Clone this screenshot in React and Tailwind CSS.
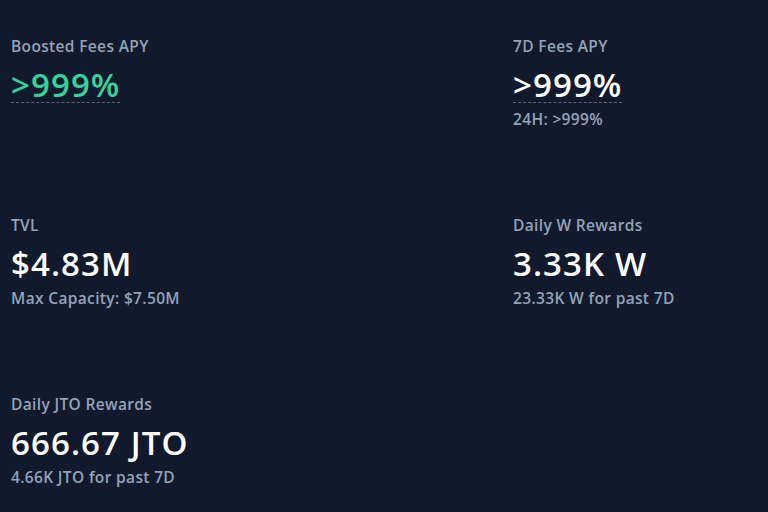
import React from "react";

function Stat({ label, value, sub, green, dashed }) {
  return (
    <div className="flex flex-col">
      <div className="h-[20px] text-[15.5px] leading-[20px] font-semibold tracking-[0.35px] text-[#94a3b8]">{label}</div>
      <div className="mt-[12px] h-[35px]">
        <span
          className={
            "inline-block text-[33px] leading-[34px] font-semibold tracking-[1.1px] " +
            (green ? "text-[#34d399] " : "text-white ") +
            (dashed ? "border-b border-dashed border-[#5b6577]" : "")
          }
        >
          {value}
        </span>
      </div>
      {sub ? (
        <div className="mt-[6px] h-[20px] text-[15.5px] leading-[20px] font-semibold tracking-[0.35px] text-[#94a3b8]">{sub}</div>
      ) : null}
    </div>
  );
}

export default function App() {
  return (
    <div
      className="w-[768px] h-[512px] bg-[#111a2c] overflow-hidden pl-[11px] pt-[36px]"
      style={{ fontFamily: '"Open Sans", "Noto Sans", sans-serif' }}
    >
      <div className="grid grid-cols-[502px_1fr] gap-y-[86px]">
        <Stat label="Boosted Fees APY" value=">999%" green dashed />
        <Stat label="7D Fees APY" value=">999%" sub="24H: >999%" dashed />
        <Stat label="TVL" value="$4.83M" sub="Max Capacity: $7.50M" />
        <Stat label="Daily W Rewards" value="3.33K W" sub="23.33K W for past 7D" />
        <Stat label="Daily JTO Rewards" value="666.67 JTO" sub="4.66K JTO for past 7D" />
      </div>
    </div>
  );
}
